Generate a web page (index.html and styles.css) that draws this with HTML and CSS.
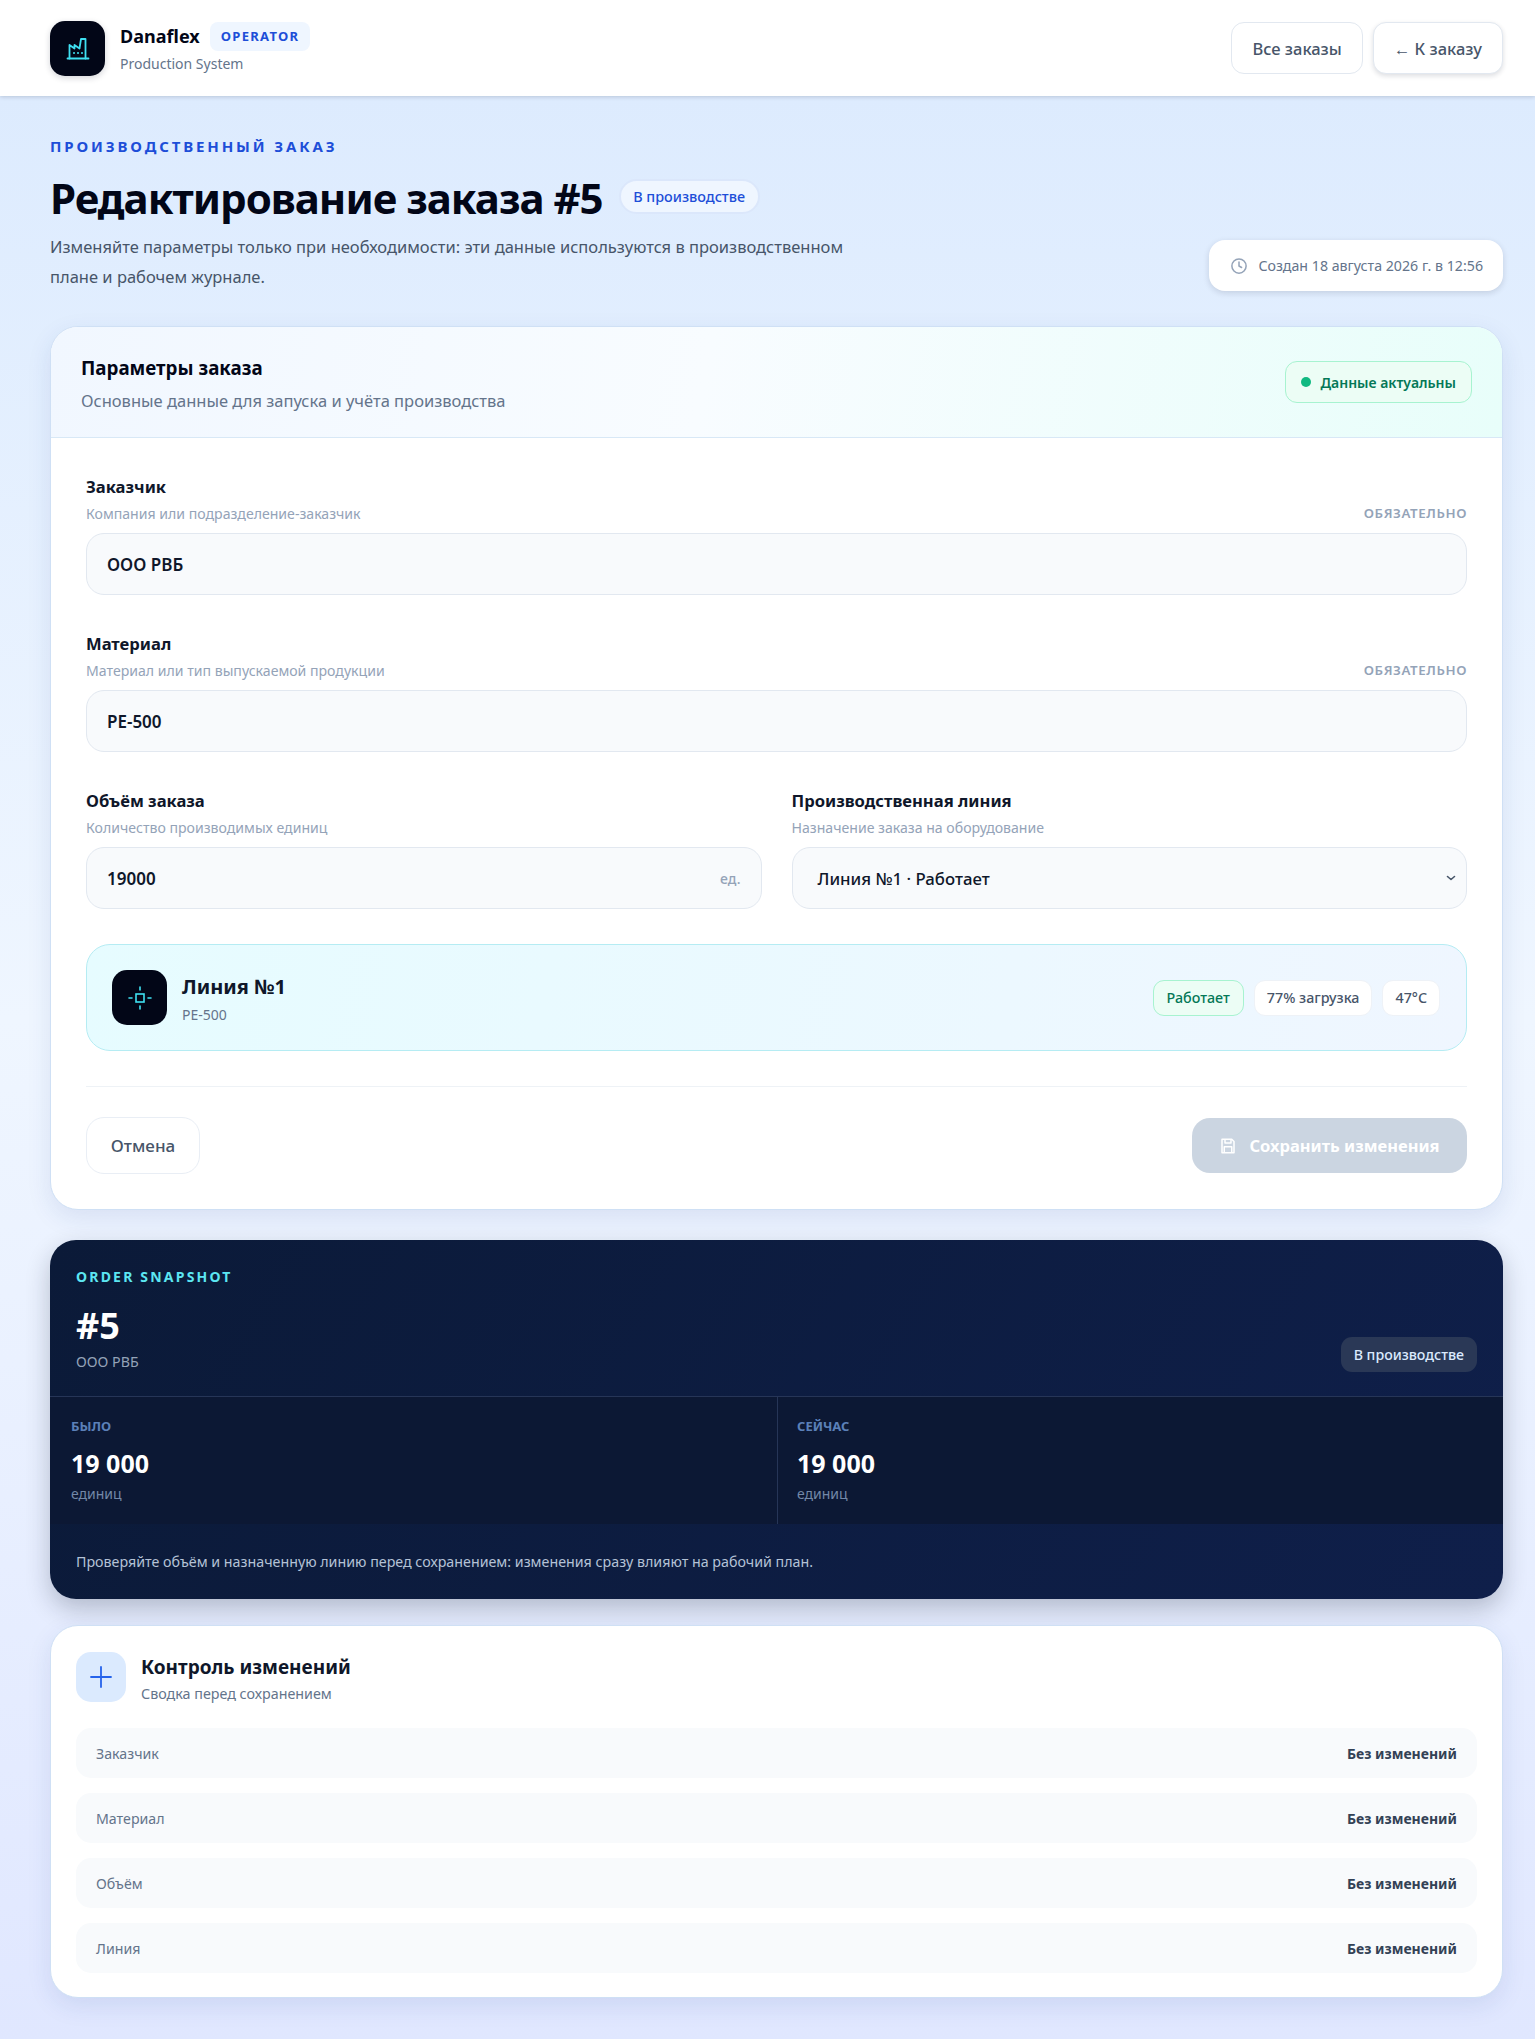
FILE: index.html
```html
<!DOCTYPE html>
<html lang="ru">
<head>
<meta charset="utf-8">
<title>Danaflex</title>
<link rel="stylesheet" href="styles.css">
</head>
<body>
<header class="topbar">
  <div class="brand">
    <div class="logo">
      <svg viewBox="0 0 24 24" width="24" height="24" fill="none" stroke="#3fe0f2" stroke-width="1.8" stroke-linecap="round" stroke-linejoin="round"><path d="M1.5 22.5h21"/><path d="M3.5 22.5V9l5 3.5V9l5 3.5 1.500-9.500h4.500v19.500"/><path d="M8 17h.01M12 17h.01M16 17h.01" stroke-width="2"/></svg>
    </div>
    <div class="brand-text">
      <div class="brand-row"><span class="brand-name">Danaflex</span><span class="role">OPERATOR</span></div>
      <div class="brand-sub">Production System</div>
    </div>
  </div>
  <nav class="top-actions">
    <a class="btn">Все заказы</a>
    <a class="btn btn-raised">← К заказу</a>
  </nav>
</header>

<main class="page">
  <section class="hero">
    <div class="hero-main">
      <div class="eyebrow">ПРОИЗВОДСТВЕННЫЙ ЗАКАЗ</div>
      <div class="title-row">
        <h1>Редактирование заказа #5</h1>
        <span class="status-pill">В производстве</span>
      </div>
      <p class="lead">Изменяйте параметры только при необходимости: эти данные используются в производственном плане и рабочем журнале.</p>
    </div>
    <div class="created">
      <svg viewBox="0 0 24 24" width="18" height="18" fill="none" stroke="#94a3b8" stroke-width="2" stroke-linecap="round" stroke-linejoin="round"><circle cx="12" cy="12" r="9.5"/><path d="M12 6.500V12l3.500 2"/></svg>
      <span>Создан 18 августа 2026 г. в 12:56</span>
    </div>
  </section>

  <section class="card form-card">
    <div class="card-head">
      <div class="head-text">
        <h2>Параметры заказа</h2>
        <p>Основные данные для запуска и учёта производства</p>
      </div>
      <div class="fresh"><i class="dot"></i>Данные актуальны</div>
    </div>
    <div class="card-body">
      <div class="field">
        <div class="label">Заказчик</div>
        <div class="hint-row"><span class="hint">Компания или подразделение-заказчик</span><span class="req">ОБЯЗАТЕЛЬНО</span></div>
        <div class="input">ООО РВБ</div>
      </div>
      <div class="field">
        <div class="label">Материал</div>
        <div class="hint-row"><span class="hint">Материал или тип выпускаемой продукции</span><span class="req">ОБЯЗАТЕЛЬНО</span></div>
        <div class="input">PE-500</div>
      </div>
      <div class="field-grid">
        <div class="field">
          <div class="label">Объём заказа</div>
          <div class="hint-row"><span class="hint">Количество производимых единиц</span></div>
          <div class="input input-num"><span>19000</span><span class="unit">ед.</span></div>
        </div>
        <div class="field">
          <div class="label">Производственная линия</div>
          <div class="hint-row"><span class="hint">Назначение заказа на оборудование</span></div>
          <div class="input input-select"><span>Линия №1 · Работает</span>
            <svg viewBox="0 0 12 12" width="12" height="12" fill="none" stroke="#475569" stroke-width="1.6" stroke-linecap="round" stroke-linejoin="round"><path d="M2.500 4.500 6 7.500l3.500-3"/></svg>
          </div>
        </div>
      </div>
      <div class="line-box">
        <div class="line-info">
          <div class="line-icon">
            <svg viewBox="0 0 24 24" width="24" height="24" fill="none" stroke="#3fe0f2" stroke-width="1.6" stroke-linecap="round"><rect x="8" y="8" width="8" height="8"/><path d="M12 1v3M12 20v3M1 12h3M20 12h3"/></svg>
          </div>
          <div class="line-text">
            <div class="line-name">Линия №1</div>
            <div class="line-sub">PE-500</div>
          </div>
        </div>
        <div class="chips">
          <span class="chip chip-ok">Работает</span>
          <span class="chip">77% загрузка</span>
          <span class="chip">47°C</span>
        </div>
      </div>
      <div class="actions">
        <a class="btn btn-cancel">Отмена</a>
        <button class="btn-save" type="button">
          <svg viewBox="0 0 24 24" width="18" height="18" fill="none" stroke="#fff" stroke-width="2" stroke-linejoin="round"><path d="M4 3h13l3 3v15H4z"/><path d="M8 3v5h8V3M7 21v-8h10v8"/></svg>
          Сохранить изменения
        </button>
      </div>
    </div>
  </section>

  <section class="snapshot">
    <div class="snap-head">
      <div>
        <div class="snap-eyebrow">ORDER SNAPSHOT</div>
        <div class="snap-num">#5</div>
        <div class="snap-client">ООО РВБ</div>
      </div>
      <span class="snap-pill">В производстве</span>
    </div>
    <div class="snap-grid">
      <div class="snap-cell">
        <div class="snap-label">БЫЛО</div>
        <div class="snap-value">19 000</div>
        <div class="snap-unit">единиц</div>
      </div>
      <div class="snap-cell">
        <div class="snap-label">СЕЙЧАС</div>
        <div class="snap-value">19 000</div>
        <div class="snap-unit">единиц</div>
      </div>
    </div>
    <div class="snap-foot">Проверяйте объём и назначенную линию перед сохранением: изменения сразу влияют на рабочий план.</div>
  </section>

  <section class="card control">
    <div class="control-head">
      <div class="plus">
        <svg viewBox="0 0 24 24" width="24" height="24" fill="none" stroke="#2563eb" stroke-width="1.8" stroke-linecap="round"><path d="M12 2v20M2 12h20"/></svg>
      </div>
      <div class="control-text">
        <h3>Контроль изменений</h3>
        <p>Сводка перед сохранением</p>
      </div>
    </div>
    <div class="rows">
      <div class="row"><span>Заказчик</span><b>Без изменений</b></div>
      <div class="row"><span>Материал</span><b>Без изменений</b></div>
      <div class="row"><span>Объём</span><b>Без изменений</b></div>
      <div class="row"><span>Линия</span><b>Без изменений</b></div>
    </div>
  </section>
</main>
</body>
</html>
```

FILE: styles.css
```css
* { box-sizing: border-box; }
html, body { margin: 0; padding: 0; }
body {
  font-family: "Noto Sans", "Open Sans", sans-serif;
  color: #0f172a;
  min-height: 2039px;
  background: linear-gradient(180deg, #dbeafe 0%, #eff6ff 50%, #e0e7ff 100%);
}
h1, h2, h3, p { margin: 0; }

.topbar {
  height: 96px;
  background: #fff;
  display: flex;
  align-items: center;
  justify-content: space-between;
  padding: 0 32px 0 50px;
  box-shadow: 0 1px 4px rgba(15, 23, 42, .18);
}
.brand { display: flex; align-items: center; gap: 15px; }
.logo {
  width: 55px; height: 55px;
  border-radius: 15px;
  background: #020617;
  display: flex; align-items: center; justify-content: center;
  box-shadow: 0 2px 6px rgba(15, 23, 42, .18);
}
.brand-row { display: flex; align-items: center; gap: 10px; }
.brand-name { font-size: 18px; font-weight: 700; color: #020617; line-height: 29px; }
.role {
  font-size: 13px; font-weight: 700; letter-spacing: 1.3px; color: #1d4ed8;
  background: #eff6ff; border-radius: 8px; padding: 5px 11px; line-height: 19px;
}
.brand-sub { font-size: 14px; color: #64748b; line-height: 20px; margin-top: 3px; }
.top-actions { display: flex; gap: 10px; }
.btn {
  display: inline-flex; align-items: center; justify-content: center;
  height: 52px; padding: 0 20px;
  font-size: 16.5px; font-weight: 500; color: #475569;
  background: #fff; border: 1px solid #e2e8f0; border-radius: 13px;
}
.btn-raised { box-shadow: 0 2px 5px rgba(15, 23, 42, .14); }

.page { padding: 40px 32px 42px 50px; display: flex; flex-direction: column; }

.hero { display: flex; align-items: flex-end; justify-content: space-between; margin-bottom: 34px; }
.hero-main { width: 820px; }
.eyebrow { font-size: 15px; font-weight: 700; letter-spacing: 2.86px; color: #1d4ed8; line-height: 20px; }
.title-row { display: flex; align-items: center; gap: 16px; margin-top: 13px; }
h1 { font-size: 42px; font-weight: 700; line-height: 58px; color: #020617; letter-spacing: -1px; }
.status-pill {
  font-size: 14.4px; font-weight: 500; color: #1d4ed8;
  background: #eff6ff; border: 2px solid #dbe7fb; border-radius: 18px;
  height: 35px; padding: 0 12.5px; margin-bottom: 3px; display: inline-flex; align-items: center;
}
.lead { font-size: 16.5px; line-height: 30px; color: #475569; margin-top: 5px; }
.created {
  display: flex; align-items: center; gap: 10px;
  height: 51px; padding: 0 20px 0 21px; margin-bottom: 1px;
  background: #fff; border-radius: 16px;
  font-size: 14.2px; color: #64748b;
  box-shadow: 0 2px 6px rgba(15, 23, 42, .14);
}

.card {
  background: #fff;
  border: 1px solid #cfe0f5;
  border-radius: 28px;
  box-shadow: 0 8px 24px rgba(30, 58, 138, .10);
}
.form-card { overflow: hidden; }
.card-head {
  height: 111px;
  display: flex; align-items: center; justify-content: space-between;
  padding: 0 30px;
  background: linear-gradient(100deg, #f1f7ff 0%, #f8fcff 45%, #e8fefa 100%);
  border-bottom: 1px solid #d8e8f6;
}
.head-text { padding-top: 3px; }
.card-head h2 { font-size: 18.8px; font-weight: 700; color: #020617; line-height: 26px; }
.card-head p { font-size: 16.5px; color: #64748b; line-height: 24px; margin-top: 8px; }
.fresh {
  display: flex; align-items: center; gap: 9px;
  height: 42px; padding: 0 15px;
  background: #ecfdf5; border: 1px solid #a7f3d0; border-radius: 12px;
  font-size: 14px; font-weight: 600; color: #047857;
}
.dot { width: 10px; height: 10px; border-radius: 50%; background: #10b981; }

.card-body { padding: 37px 35px 35px; }
.field { margin-bottom: 37px; }
.field-grid .field { margin-bottom: 35px; }
.label { font-size: 16.6px; font-weight: 700; color: #0f172a; line-height: 24px; }
.hint-row { display: flex; justify-content: space-between; align-items: flex-start; line-height: 20px; margin-top: 5px; margin-bottom: 9px; }
.hint { font-size: 14.1px; color: #94a3b8; }
.req { font-size: 13.3px; font-weight: 600; letter-spacing: .6px; color: #94a3b8; line-height: 18px; }
.input {
  height: 62px;
  display: flex; align-items: center;
  padding: 0 20px;
  background: #f8fafc; border: 1px solid #e2e8f0; border-radius: 18px;
  font-size: 17px; font-weight: 600; color: #0f172a;
}
.input-num { justify-content: space-between; }
.unit { font-size: 14px; font-weight: 500; color: #94a3b8; }
.input-select { justify-content: space-between; padding: 0 9px 0 25px; font-size: 16.8px; font-weight: 500; }
.field-grid { display: grid; grid-template-columns: 1fr 1fr; gap: 30px; }

.line-box {
  height: 107px;
  display: flex; align-items: center; justify-content: space-between;
  padding: 0 26px 0 25px;
  background: linear-gradient(100deg, #e6fcff 0%, #eff6ff 100%);
  border: 1px solid #b5ecf3; border-radius: 24px;
}
.line-info { display: flex; align-items: center; gap: 15px; }
.line-icon {
  width: 55px; height: 55px; border-radius: 15px; background: #020617;
  display: flex; align-items: center; justify-content: center;
}
.line-text { padding-top: 2px; }
.line-name { font-size: 20px; font-weight: 700; color: #0f172a; line-height: 28px; }
.line-sub { font-size: 14px; color: #64748b; line-height: 20px; margin-top: 4px; }
.chips { display: flex; gap: 10px; }
.chip {
  height: 36px; padding: 0 12px; display: inline-flex; align-items: center;
  font-size: 14.3px; font-weight: 500; color: #475569;
  background: #fff; border: 1px solid #eef2f7; border-radius: 11px;
}
.chip-ok { background: #ecfdf5; border-color: #a7f3d0; color: #047857; padding: 0 13px; }

.actions {
  margin-top: 35px; padding-top: 30px;
  border-top: 1px solid #eef2f6;
  display: flex; align-items: center; justify-content: space-between;
}
.btn-cancel { width: 114px; height: 57px; border-radius: 18px; font-size: 17px; font-weight: 500; padding: 0; border-color: #e9eef5; }
.btn-save {
  height: 55px; width: 275px;
  display: flex; align-items: center; justify-content: center; gap: 12px;
  background: #cbd5e1; color: #fff; border: 0; border-radius: 18px;
  font: 700 16.5px "Noto Sans", "Open Sans", sans-serif;
}

.snapshot {
  margin-top: 30px;
  border-radius: 26px;
  background: linear-gradient(120deg, #0b1a38 0%, #0f1f4a 100%);
  box-shadow: 0 10px 24px rgba(15, 23, 42, .24);
  overflow: hidden;
}
.snap-head {
  height: 157px;
  padding: 27px 26px 0;
  display: flex; justify-content: space-between; align-items: flex-start;
  border-bottom: 1px solid #263557;
}
.snap-eyebrow { font-size: 14px; font-weight: 700; letter-spacing: 2.2px; color: #5ce6f2; line-height: 20px; }
.snap-num { font-size: 36px; font-weight: 700; color: #fff; line-height: 46px; margin-top: 16px; }
.snap-client { font-size: 14.2px; color: #94a3b8; line-height: 20px; margin-top: 3px; }
.snap-pill {
  margin-top: 70px;
  height: 35px; padding: 0 13px; display: inline-flex; align-items: center;
  background: #2a3856; border-radius: 11px;
  font-size: 14.2px; font-weight: 500; color: #dbeafe;
}
.snap-grid { display: grid; grid-template-columns: 727px 1fr; height: 127px; background: #0c1834; }
.snap-cell { padding: 19px 21px 0; }
.snap-cell + .snap-cell { border-left: 1px solid #263557; padding-left: 19px; }
.snap-label { font-size: 13px; font-weight: 700; color: #5b80b8; line-height: 20px; }
.snap-value { font-size: 25px; font-weight: 700; color: #fff; line-height: 34px; margin-top: 10px; }
.snap-unit { font-size: 14px; color: #7388a8; line-height: 20px; margin-top: 4px; }
.snap-foot { height: 75px; padding: 0 26px; display: flex; align-items: center; font-size: 14.25px; color: #b4c2d6; }

.control { margin-top: 26px; padding: 26px 25px 24px 25px; }
.control-head { display: flex; align-items: flex-start; gap: 15px; height: 50px; margin-bottom: 26px; }
.plus {
  width: 50px; height: 50px; border-radius: 15px; background: #dbeafe;
  display: flex; align-items: center; justify-content: center;
}
.control-text { padding-top: 3px; }
.control-head h3 { font-size: 19px; font-weight: 700; color: #0f172a; line-height: 24px; }
.control-head p { font-size: 14.3px; color: #64748b; line-height: 20px; margin-top: 5px; }
.rows { display: flex; flex-direction: column; gap: 15px; }
.row {
  height: 50px; padding: 0 20px; border-radius: 15px; background: #f8fafc;
  display: flex; align-items: center; justify-content: space-between;
  font-size: 14.2px; color: #64748b;
}
.row b { font-size: 14px; font-weight: 700; color: #334155; }
```
